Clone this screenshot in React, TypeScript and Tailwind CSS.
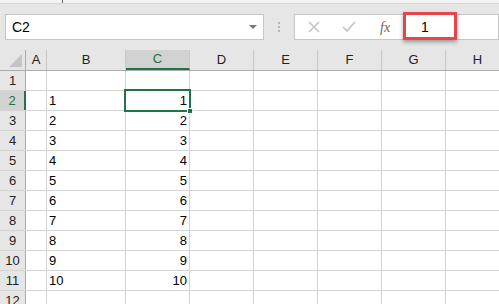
import React from "react";

const cols = [
  { name: "A", w: "w-[21px]" },
  { name: "B", w: "w-[79px]" },
  { name: "C", w: "w-[64px]" },
  { name: "D", w: "w-[64px]" },
  { name: "E", w: "w-[64px]" },
  { name: "F", w: "w-[64px]" },
  { name: "G", w: "w-[64px]" },
  { name: "H", w: "w-[64px]" },
];

const rows = Array.from({ length: 12 }, (_, i) => i + 1);

function valueFor(row: number, col: string) {
  if (row >= 2 && row <= 11 && (col === "B" || col === "C")) return String(row - 1);
  return "";
}

function HeaderRow() {
  return (
    <div className="flex h-[21px] bg-[#e6e6e6] border-b border-[#ababab]">
      <div className="relative w-[26px] shrink-0 border-r border-[#ababab]">
        <div
          className="absolute right-[3px] bottom-[3px] w-0 h-0 border-l-[13px] border-l-transparent border-b-[13px] border-b-[#c4c4c4]"
        />
      </div>
      {cols.map((c) => {
        const active = c.name === "C";
        return (
          <div
            key={c.name}
            className={`${c.w} shrink-0 flex items-center justify-center border-r border-[#c8c8c8] ${
              active ? "bg-[#d2d2d2] text-[#217346] border-b-2 border-b-[#217346]" : "text-[#222]"
            }`}
          >
            {c.name}
          </div>
        );
      })}
    </div>
  );
}

function GridRow({ row }: { row: number }) {
  const active = row === 2;
  return (
    <div className="flex h-[20px] border-b border-[#d4d4d4]">
      <div
        className={`w-[26px] shrink-0 flex items-center justify-center border-r ${
          active
            ? "bg-[#d2d2d2] text-[#217346] border-r-2 border-r-[#217346]"
            : "bg-[#e6e6e6] text-[#222] border-r-[#ababab]"
        }`}
      >
        {row}
      </div>
      {cols.map((c) => (
        <div
          key={c.name}
          className={`${c.w} shrink-0 flex items-center border-r border-[#d4d4d4] bg-white ${
            c.name === "C" ? "justify-end pr-[2px]" : "pl-[2px]"
          }`}
        >
          {valueFor(row, c.name)}
        </div>
      ))}
    </div>
  );
}

export default function App() {
  return (
    <div
      className="relative w-[499px] h-[304px] overflow-hidden bg-[#e6e6e6] text-[13px] text-black"
      style={{ fontFamily: '"Liberation Sans", Arial, sans-serif' }}
    >
      <div className="relative h-[4px] bg-[#f3f3f3] border-b border-[#d8d8d8]">
        <div className="absolute left-[62px] top-0 w-[1px] h-[3px] bg-[#666]" />
      </div>

      <div className="flex items-center h-[46px] pb-[10px] pt-[10px]">
        <div className="ml-[5px] w-[259px] h-[26px] shrink-0 bg-white border border-[#c6c6c6] flex items-center justify-between pl-[6px] pr-[6px] text-[14px]">
          <span>C2</span>
          <span className="w-0 h-0 border-l-[4px] border-r-[4px] border-t-[4px] border-l-transparent border-r-transparent border-t-[#777]" />
        </div>
        <div className="w-[30px] shrink-0 flex flex-col items-center gap-[2px]">
          <span className="w-[2px] h-[2px] bg-[#b4b4b4]" />
          <span className="w-[2px] h-[2px] bg-[#b4b4b4]" />
          <span className="w-[2px] h-[2px] bg-[#b4b4b4]" />
        </div>
        <div className="flex-1 h-[26px] bg-white border border-[#c6c6c6] flex items-center pl-[13px]">
          <svg width="12" height="12" viewBox="0 0 12 12" className="shrink-0">
            <path d="M1 1 L11 11 M11 1 L1 11" stroke="#c3c3c3" strokeWidth="1.5" fill="none" />
          </svg>
          <svg width="14" height="12" viewBox="0 0 14 12" className="ml-[22px] shrink-0">
            <path d="M1 6 L5 10 L13 1" stroke="#c3c3c3" strokeWidth="1.6" fill="none" />
          </svg>
          <span
            className="ml-[24px] italic text-[14px] text-[#666]"
            style={{ fontFamily: '"Liberation Serif", serif' }}
          >
            fx
          </span>
          <span className="ml-[31px] text-[14px]">1</span>
        </div>
      </div>

      <div className="relative">
        <HeaderRow />
        {rows.map((r) => (
          <GridRow key={r} row={r} />
        ))}
        <div className="absolute left-[124px] top-[39px] w-[67px] h-[23px] border-2 border-[#217346]" />
        <div className="absolute left-[187px] top-[58px] w-[6px] h-[6px] bg-[#217346] border border-white" />
      </div>

      <div className="absolute left-[403px] top-[12px] w-[54px] h-[28px] border-[3px] border-[#e8454b] shadow-[0_2px_4px_rgba(0,0,0,0.35)]" />
    </div>
  );
}
